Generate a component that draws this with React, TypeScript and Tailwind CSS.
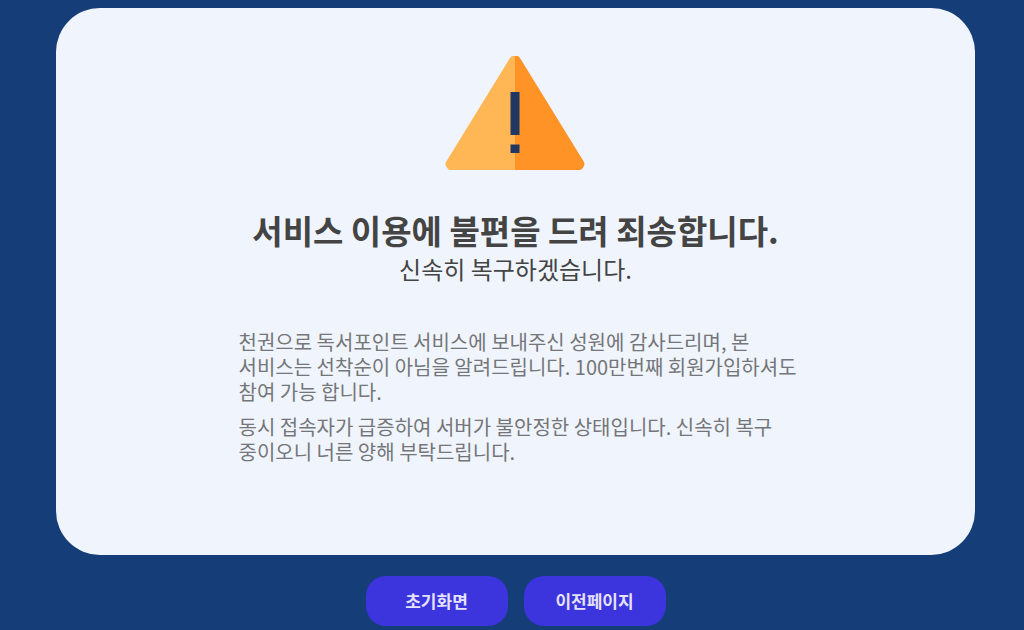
const paragraphs = [
  '천권으로 독서포인트 서비스에 보내주신 성원에 감사드리며, 본 서비스는 선착순이 아님을 알려드립니다. 100만번째 회원가입하셔도 참여 가능 합니다.',
  '동시 접속자가 급증하여 서버가 불안정한 상태입니다. 신속히 복구 중이오니 너른 양해 부탁드립니다.',
];

const actions = ['초기화면', '이전페이지'];

function WarningIcon() {
  return (
    <svg width="141" height="116" viewBox="0 0 141 116" aria-hidden="true">
      <path d="M70 1h-2q-2 0-3 2L1 107q-1 2 0 4l2 3q1 1 2 1h65z" fill="#ffb655" />
      <path d="M70 1h2q2 0 3 2l64 104q1 2 0 4l-2 3q-1 1-2 1H70z" fill="#ff9326" />
      <path d="M65.500 37h9v43h-9zM65.500 89.500h9v8.500h-9z" fill="#1f3763" />
    </svg>
  );
}

export default function App() {
  return (
    <div className="min-h-screen bg-[#153d77] pt-2 pb-[3px] pl-14 pr-[49px] font-['Noto_Sans_CJK_KR','Noto_Sans',sans-serif]">
      <main className="flex flex-col items-center rounded-[44px] bg-[#f0f4fc] px-6 pt-[47px] pb-[91px]">
        <WarningIcon />
        <h1 className="mt-[38px] text-center text-[33px] leading-[42px] font-bold text-[#444444]">
          서비스 이용에 불편을 드려 죄송합니다.
        </h1>
        <p className="text-center text-2xl leading-[36px] text-[#444444]">신속히 복구하겠습니다.</p>
        <div className="mt-[42px] flex w-full max-w-[570px] flex-col gap-[10px] pl-2 text-xl leading-[25px] break-keep text-[#747679]">
          {paragraphs.map((text) => (
            <p key={text}>{text}</p>
          ))}
        </div>
      </main>

      <div className="mt-[21px] flex justify-center gap-4">
        {actions.map((label) => (
          <button
            key={label}
            type="button"
            className="h-[50px] w-[142px] rounded-[20px] bg-[#3c34dc] text-[17px] font-bold text-[#e4e2ff]"
          >
            {label}
          </button>
        ))}
      </div>
    </div>
  );
}
